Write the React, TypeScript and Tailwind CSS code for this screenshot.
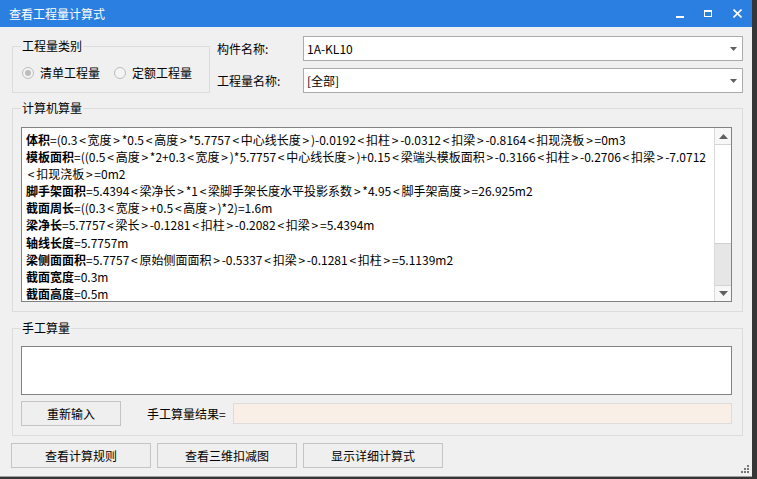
import React from "react";

const font = { fontFamily: '"Microsoft YaHei", "Noto Sans CJK SC", "Noto Sans", sans-serif' };

const lines: [string, string][] = [
  ["体积", "=(0.3<宽度>*0.5<高度>*5.7757<中心线长度>)-0.0192<扣柱>-0.0312<扣梁>-0.8164<扣现浇板>=0m3"],
  ["模板面积", "=((0.5<高度>*2+0.3<宽度>)*5.7757<中心线长度>)+0.15<梁端头模板面积>-0.3166<扣柱>-0.2706<扣梁>-7.0712"],
  ["", "<扣现浇板>=0m2"],
  ["脚手架面积", "=5.4394<梁净长>*1<梁脚手架长度水平投影系数>*4.95<脚手架高度>=26.925m2"],
  ["截面周长", "=((0.3<宽度>+0.5<高度>)*2)=1.6m"],
  ["梁净长", "=5.7757<梁长>-0.1281<扣柱>-0.2082<扣梁>=5.4394m"],
  ["轴线长度", "=5.7757m"],
  ["梁侧面面积", "=5.7757<原始侧面面积>-0.5337<扣梁>-0.1281<扣柱>=5.1139m2"],
  ["截面宽度", "=0.3m"],
  ["截面高度", "=0.5m"],
];

function Formula({ text }: { text: string }) {
  const parts = text.split(/([<>])/);
  return (
    <>
      {parts.map((p, i) =>
        p === "<" || p === ">" ? (
          <span key={i} className="mx-[1.75px]">{p}</span>
        ) : (
          <span key={i}>{p}</span>
        )
      )}
    </>
  );
}

function Combo({ value }: { value: string }) {
  return (
    <div className="flex-1 h-[25px] bg-white border border-[#ababab] flex items-center pl-[3px] pr-[5px]">
      <span className="flex-1 text-[12px] text-black leading-none">{value}</span>
      <svg width="7" height="4" viewBox="0 0 7 4">
        <path d="M0 0H7L3.5 4Z" fill="#5f5f5f" />
      </svg>
    </div>
  );
}

function Radio({ checked, label }: { checked?: boolean; label: string }) {
  return (
    <div className="flex items-center gap-[6px]">
      <div className="w-[12px] h-[12px] rounded-full border border-[#bcbcbc] bg-[#f4f4f4] flex items-center justify-center">
        {checked && <div className="w-[6px] h-[6px] rounded-full bg-[#bcbcbc]" />}
      </div>
      <span className="text-[12px] text-black leading-none">{label}</span>
    </div>
  );
}

function Btn({ label, w }: { label: string; w: string }) {
  return (
    <div className={`${w} h-[25px] bg-[#efefef] border border-[#c4c4c4] flex items-center justify-center text-[12px] text-black`}>
      {label}
    </div>
  );
}

export default function App() {
  return (
    <div className="w-[757px] h-[479px] bg-[#363636] relative overflow-hidden" style={font}>
      <div className="w-[752px] h-[477px] bg-[#f0f0f0] flex flex-col border-b border-[#a0a0a0]">
        {/* title bar */}
        <div className="h-[27px] bg-[#2b7fe0] flex items-center pl-[9px] shrink-0">
          <span className="text-white text-[12px] flex-1">查看工程量计算式</span>
          <div className="flex items-center h-full">
            <div className="w-[28px] flex justify-center">
              <div className="w-[8px] h-[2px] bg-white mt-[6px]" />
            </div>
            <div className="w-[28px] flex justify-center">
              <div className="w-[8px] h-[7px] border border-white border-t-2" />
            </div>
            <div className="w-[30px] flex justify-center">
              <svg width="9" height="9" viewBox="0 0 9 9">
                <path d="M0.5 0.5L8.5 8.5M8.5 0.5L0.5 8.5" stroke="white" strokeWidth="1.6" />
              </svg>
            </div>
          </div>
        </div>

        <div className="flex-1 flex flex-col pl-[12px] pr-[9px] relative">
          {/* top row */}
          <div className="flex mt-[9px]">
            <div className="w-[198px] h-[47px] mt-[10px] border border-[#dcdcdc] relative">
              <span className="absolute -top-[9px] left-[8px] bg-[#f0f0f0] px-[1px] text-[12px] leading-[16px] text-black">工程量类别</span>
              <div className="flex items-center gap-[14px] pl-[9px] mt-[20px]">
                <Radio checked label="清单工程量" />
                <Radio label="定额工程量" />
              </div>
            </div>
            <div className="flex-1 ml-[7px] flex flex-col gap-[7px]">
              <div className="flex items-center">
                <span className="w-[86px] text-[12px] text-black">构件名称:</span>
                <Combo value="1A-KL10" />
              </div>
              <div className="flex items-center">
                <span className="w-[86px] text-[12px] text-black">工程量名称:</span>
                <Combo value="[全部]" />
              </div>
            </div>
          </div>

          {/* computer group */}
          <div className="mt-[15px] h-[204px] border border-[#dcdcdc] relative pl-[8px] pr-[10px] pt-[18px]">
            <span className="absolute -top-[9px] left-[8px] bg-[#f0f0f0] px-[1px] text-[12px] leading-[16px] text-black">计算机算量</span>
            <div className="h-[175px] bg-white border border-[#828282] flex">
              <div className="flex-1 overflow-hidden pt-[3px] pl-[4px]">
                {lines.map(([b, r], i) => (
                  <div key={i} className="h-[17.1px] leading-[17px] text-[12px] text-black whitespace-nowrap">
                    {b && <span className="font-bold">{b}</span>}
                    <Formula text={r} />
                  </div>
                ))}
              </div>
              <div className="w-[17px] flex flex-col border-l border-[#dadada] bg-[#f7f7f7]">
                <div className="h-[17px] flex items-center justify-center border-b border-[#d4d4d4]">
                  <svg width="9" height="5" viewBox="0 0 9 5"><path d="M0 5H9L4.5 0Z" fill="#606060" /></svg>
                </div>
                <div className="h-[99px] bg-white border-b border-[#d0d0d0]" />
                <div className="flex-1 bg-[#e6e6e6]" />
                <div className="h-[16px] flex items-center justify-center border-t border-[#d4d4d4]">
                  <svg width="9" height="5" viewBox="0 0 9 5"><path d="M0 0H9L4.5 5Z" fill="#606060" /></svg>
                </div>
              </div>
            </div>
          </div>

          {/* manual group */}
          <div className="mt-[16px] h-[108px] border border-[#dcdcdc] relative pl-[8px] pr-[10px] pt-[17px]">
            <span className="absolute -top-[9px] left-[8px] bg-[#f0f0f0] px-[1px] text-[12px] leading-[16px] text-black">手工算量</span>
            <div className="h-[49px] bg-white border border-[#828282]" />
            <div className="flex items-center mt-[6px]">
              <Btn label="重新输入" w="w-[100px]" />
              <span className="ml-[26px] w-[86px] text-[12px] text-black">手工算量结果=</span>
              <div className="flex-1 h-[21px] bg-[#f9efe6] border border-[#dcdcdc]" />
            </div>
          </div>

          {/* bottom buttons */}
          <div className="flex gap-[6px] mt-[7px] -ml-[1px]">
            <Btn label="查看计算规则" w="w-[140px]" />
            <Btn label="查看三维扣减图" w="w-[140px]" />
            <Btn label="显示详细计算式" w="w-[140px]" />
          </div>

          <svg className="absolute right-[3px] bottom-[3px]" width="8" height="8" viewBox="0 0 8 8">
            <rect x="6" y="0" width="2" height="2" fill="#777" />
            <rect x="3" y="3" width="2" height="2" fill="#777" />
            <rect x="6" y="3" width="2" height="2" fill="#777" />
            <rect x="0" y="6" width="2" height="2" fill="#777" />
            <rect x="3" y="6" width="2" height="2" fill="#777" />
            <rect x="6" y="6" width="2" height="2" fill="#777" />
          </svg>
        </div>
      </div>
    </div>
  );
}
